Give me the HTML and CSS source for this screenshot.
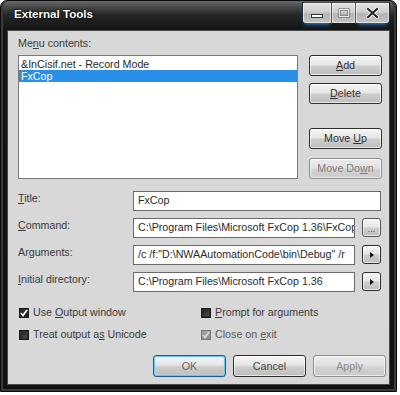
FILE: index.html
```html
<!DOCTYPE html>
<html>
<head>
<meta charset="utf-8">
<link rel="stylesheet" href="styles.css">
</head>
<body>
<div class="window">
  <div class="titlebar">
    <span class="title">External Tools</span>
    <div class="caption">
      <span class="cb min"><svg width="14" height="6" viewBox="0 0 14 6"><rect x="1.5" y="1.5" width="11" height="3" fill="#fff" stroke="#333" stroke-width="1"/></svg></span>
      <span class="cb max"><svg width="12" height="10" viewBox="0 0 12 10"><rect x="1.5" y="1.5" width="9" height="7" fill="none" stroke="#555" stroke-width="2"/><rect x="1.5" y="1.5" width="9" height="7" fill="none" stroke="#e8e8e8" stroke-width="1"/></svg></span>
      <span class="cb close"><svg width="13" height="12" viewBox="0 0 13 12"><path d="M2 2 L11 10 M11 2 L2 10" stroke="#f4f4f4" stroke-width="4" stroke-linecap="round"/><path d="M2 2 L11 10 M11 2 L2 10" stroke="#222" stroke-width="2" stroke-linecap="square"/></svg></span>
    </div>
  </div>
  <div class="client">
    <div class="top">
      <div class="lbl">Me<u>n</u>u contents:</div>
      <div class="list">
        <div class="item">&amp;InCisif.net - Record Mode</div>
        <div class="item sel">FxCop</div>
      </div>
      <div class="sidebtns">
        <div class="btn"><u>A</u>dd</div>
        <div class="btn gap7"><u>D</u>elete</div>
        <div class="btn push"><span>Move <u>U</u>p</span></div>
        <div class="btn gap9 disabled">Move Do<u>w</u>n</div>
      </div>
    </div>
    <div class="form">
      <div class="row">
        <div class="flbl"><u>T</u>itle:</div>
        <div class="field"><div class="input">FxCop</div></div>
      </div>
      <div class="row">
        <div class="flbl"><u>C</u>ommand:</div>
        <div class="field"><div class="input">C:\Program Files\Microsoft FxCop 1.36\FxCop</div><div class="sbtn dots">...</div></div>
      </div>
      <div class="row">
        <div class="flbl">Ar<u>g</u>uments:</div>
        <div class="field"><div class="input">/c /f:"D:\NWAAutomationCode\bin\Debug" /r</div><div class="sbtn"><span class="tri"></span></div></div>
      </div>
      <div class="row">
        <div class="flbl"><u>I</u>nitial directory:</div>
        <div class="field"><div class="input">C:\Program Files\Microsoft FxCop 1.36</div><div class="sbtn"><span class="tri"></span></div></div>
      </div>
    </div>
    <div class="checks">
      <div class="chk"><span class="box on"><svg width="8" height="8" viewBox="0 0 8 8"><path d="M1 4 L3 6.5 L7 1" stroke="#fff" stroke-width="1.8" fill="none"/></svg></span><span>Use <u>O</u>utput window</span></div>
      <div class="chk"><span class="box"></span><span><u>P</u>rompt for arguments</span></div>
      <div class="chk"><span class="box"></span><span>Treat output a<u>s</u> Unicode</span></div>
      <div class="chk dis"><span class="box on grey"><svg width="8" height="8" viewBox="0 0 8 8"><path d="M1 4 L3 6.5 L7 1" stroke="#d8d8d8" stroke-width="1.8" fill="none"/></svg></span><span>Close on <u>e</u>xit</span></div>
    </div>
    <div class="actions">
      <div class="btn big default">OK</div>
      <div class="btn big">Cancel</div>
      <div class="btn big disabled">Apply</div>
    </div>
  </div>
</div>
</body>
</html>
```
FILE: styles.css
```css
html, body {
  margin: 0;
  background: #ffffff;
}
body {
  font-family: "Liberation Sans", Arial, sans-serif;
  font-size: 10.7px;
  color: #2a2a2a;
}
.window {
  width: 397px;
  height: 392px;
  box-sizing: border-box;
  border: 1px solid #0a0a0a;
  border-radius: 7px 7px 0 0;
  padding: 0 6px 6px 6px;
  background: linear-gradient(180deg, #6a6a6a 0, #484848 6px, #262626 14px, #151515 28px, #121212 100%);
  box-shadow: inset 2px 0 0 #3a3a3a, inset -2px 0 0 #3a3a3a, inset 0 -2px 0 #3a3a3a;
  display: flex;
  flex-direction: column;
}
.titlebar {
  height: 29px;
  flex: none;
  display: flex;
  justify-content: space-between;
  align-items: flex-start;
}
.title {
  color: #fff;
  font-weight: bold;
  font-size: 11.6px;
  line-height: 14px;
  padding: 6px 0 0 7px;
  text-shadow: 0 0 3px #000, 0 0 1px #000;
}
.caption {
  display: flex;
  margin-top: 1px;
  height: 20px;
  border: 1px solid #1c1c1c;
  border-top-color: #444;
  border-radius: 0 0 4px 4px;
}
.cb {
  display: flex;
  align-items: center;
  justify-content: center;
  box-sizing: border-box;
  height: 100%;
  background: linear-gradient(180deg, #e2e2e2 0, #cfcfcf 45%, #b4b4b4 55%, #c4c4c4 100%);
  box-shadow: inset 0 0 0 1px rgba(255,255,255,0.5);
}
.cb.min { width: 29px; border-right: 1px solid #555; border-radius: 0 0 0 3px; box-shadow: inset 0 0 0 1px rgba(255,255,255,0.5), 0 3px 4px -2px #2f8cff; padding-top: 5px; }
.cb.max { width: 24px; border-right: 1px solid #555; }
.cb.close { width: 33px; border-radius: 0 0 3px 0; box-shadow: inset 0 0 0 1px rgba(255,255,255,0.5), 0 3px 4px -2px #2f8cff; }
.client {
  flex: 1;
  background: #d8d8d8;
  box-shadow: inset 0 0 0 1px #4a4a4a;
  padding: 7px 8px 0 11px;
  display: flex;
  flex-direction: column;
}
.top {
  display: grid;
  grid-template-columns: 280px 73px;
  grid-template-rows: 13px 124px;
  column-gap: 11px;
  row-gap: 5px;
  grid-template-areas: "lbl ." "list btns";
}
.lbl {
  grid-area: lbl;
  line-height: 13px;
  color: #3a3a3a;
}
.list {
  grid-area: list;
  background: #fff;
  border: 1px solid #7a7a7a;
  padding-top: 2px;
}
.item {
  height: 12px;
  line-height: 12px;
  padding-left: 2px;
  white-space: nowrap;
  color: #2a2a2a;
}
.item.sel {
  background: #2a8fe8;
  color: #fff;
}
.sidebtns {
  grid-area: btns;
  display: flex;
  flex-direction: column;
}
.btn {
  box-sizing: border-box;
  height: 21px;
  display: flex;
  align-items: center;
  justify-content: center;
  border: 1px solid #2e2e2e;
  border-radius: 3px;
  background: linear-gradient(180deg, #f6f6f6 0, #e6e6e6 45%, #cdcdcd 55%, #bdbdbd 100%);
  box-shadow: inset 0 0 0 1px rgba(255,255,255,0.65);
  color: #333;
  line-height: 13px;
}
.gap7 { margin-top: 7px; }
.gap9 { margin-top: 9px; }
.push { margin-top: auto; }
.btn.disabled {
  border-color: #8e8e8e;
  background: linear-gradient(180deg, #ececec 0, #e2e2e2 45%, #d2d2d2 55%, #cacaca 100%);
  color: #7e7e7e;
}
.form {
  margin-top: 12px;
  display: flex;
  flex-direction: column;
  gap: 7px;
}
.row {
  display: flex;
  height: 20px;
}
.flbl {
  width: 115px;
  flex: none;
  line-height: 13px;
  padding-top: 1px;
  color: #3a3a3a;
}
.field {
  width: 248px;
  display: flex;
  gap: 7px;
}
.input {
  flex: 1;
  min-width: 0;
  box-sizing: border-box;
  height: 20px;
  background: #fff;
  border: 1px solid #6a6a6a;
  padding: 2px 4px 3px 4px;
  line-height: 13px;
  white-space: nowrap;
  overflow: hidden;
  color: #2a2a2a;
}
.sbtn {
  width: 19px;
  height: 19px;
  flex: none;
  box-sizing: border-box;
  border: 1px solid #2e2e2e;
  border-radius: 3px;
  background: linear-gradient(180deg, #f6f6f6 0, #e6e6e6 45%, #cdcdcd 55%, #bdbdbd 100%);
  box-shadow: inset 0 0 0 1px rgba(255,255,255,0.65);
  display: flex;
  align-items: center;
  justify-content: center;
}
.sbtn.dots {
  align-items: flex-end;
  font-size: 9px;
  line-height: 9px;
  padding-bottom: 2px;
  color: #555;
  border-color: #555;
}
.tri {
  width: 0;
  height: 0;
  border-top: 3.5px solid transparent;
  border-bottom: 3.5px solid transparent;
  border-left: 4px solid #111;
  margin-left: 1px;
}
.checks {
  margin-top: 14px;
  display: grid;
  grid-template-columns: 182px auto;
  row-gap: 9px;
  padding-left: 1px;
}
.chk {
  display: flex;
  align-items: center;
  gap: 4px;
  height: 13px;
  line-height: 13px;
  color: #3a3a3a;
}
.box {
  width: 10px;
  height: 10px;
  box-sizing: border-box;
  border: 1px solid #1a1a1a;
  background: linear-gradient(135deg, #1c1c1c 0, #3c3c3c 60%, #5a5a5a 100%);
  box-shadow: inset 0 0 0 1px #2a2a2a;
  display: flex;
  align-items: center;
  justify-content: center;
  flex: none;
}
.box.on {
  background: linear-gradient(180deg, #3a3a3a, #0e0e0e);
}
.box.grey {
  border-color: #7a7a7a;
  background: linear-gradient(180deg, #a4a4a4, #8a8a8a);
  box-shadow: none;
}
.chk.dis { color: #5a5a5a; }
.actions {
  margin-top: 14px;
  margin-right: -4px;
  display: flex;
  justify-content: flex-end;
  gap: 7px;
}
.btn.big {
  width: 73px;
  height: 22px;
  color: #4a4a4a;
}
.btn.big.disabled { color: #8e8e8e; }
.btn.default {
  border: 1px solid #1f5e94;
  box-shadow: inset 0 0 0 1px #6fc4f2, inset 0 0 2px 1px #aee0fa;
  color: #666;
}
```
